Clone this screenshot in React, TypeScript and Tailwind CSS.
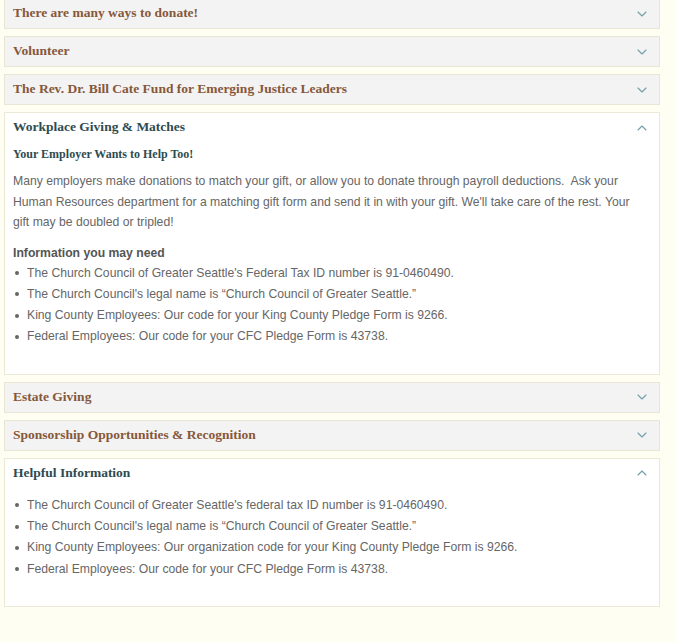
import { ChevronDown, ChevronUp } from "lucide-react"

const serif = { fontFamily: '"Liberation Serif", "DejaVu Serif", serif' }

function Header({ title, open }: { title: string; open?: boolean }) {
    return (
        <div className="h-[29px] flex items-center justify-between pl-2 pr-[9px]">
            <span
                className={`text-[13.5px] font-bold ${open ? "text-[#2f4b50]" : "text-[#86583a]"}`}
                style={serif}
            >
                {title}
            </span>
            {open ? (
                <ChevronUp className="w-4 h-4 text-[#74a0aa]" strokeWidth={1.7} />
            ) : (
                <ChevronDown className="w-4 h-4 text-[#74a0aa]" strokeWidth={1.7} />
            )}
        </div>
    )
}

function Closed({ title }: { title: string }) {
    return (
        <div className="border border-[#e9e6d6] bg-[#f3f3f3]">
            <Header title={title} />
        </div>
    )
}

function Bullets({ items, lh }: { items: string[]; lh: string }) {
    return (
        <ul className={lh}>
            {items.map((t) => (
                <li key={t} className="flex items-center">
                    <span className="w-[4px] h-[4px] rounded-full bg-[#666] ml-[2px] mr-[8px]" />
                    <span>{t}</span>
                </li>
            ))}
        </ul>
    )
}

export default function App() {
    return (
        <div
            className="min-h-[642px] w-[676px] bg-[#fffef3] overflow-hidden"
            style={{ fontFamily: '"Liberation Sans", Arial, sans-serif' }}
        >
            <div className="ml-[4px] w-[656px] -mt-[2px] flex flex-col gap-[7px]">
                <Closed title="There are many ways to donate!" />
                <Closed title="Volunteer" />
                <Closed title="The Rev. Dr. Bill Cate Fund for Emerging Justice Leaders" />

                {/* Workplace Giving */}
                <div className="border border-[#ece9d7] bg-white">
                    <Header title="Workplace Giving & Matches" open />
                    <div className="px-2 pb-[26px] text-[12.2px] text-[#666]">
                        <h3
                            className="mt-[2px] leading-[20px] text-[12px] font-bold text-[#2f4b50]"
                            style={serif}
                        >
                            Your Employer Wants to Help Too!
                        </h3>
                        <p className="mt-[7px] pr-[10px] leading-[20.5px]">
                            Many employers make donations to match your gift, or allow you to donate through payroll deductions.&nbsp; Ask your Human Resources department for a matching gift form and send it in with your gift. We'll take care of the rest. Your gift may be doubled or tripled!
                        </p>
                        <p className="mt-[10px] leading-[20px] font-bold text-[#555]">Information you may need</p>
                        <Bullets
                            lh="leading-[21.3px]"
                            items={[
                                "The Church Council of Greater Seattle's Federal Tax ID number is 91-0460490.",
                                "The Church Council's legal name is \u201cChurch Council of Greater Seattle.\u201d",
                                "King County Employees: Our code for your King County Pledge Form is 9266.",
                                "Federal Employees: Our code for your CFC Pledge Form is 43738.",
                            ]}
                        />
                    </div>
                </div>

                <Closed title="Estate Giving" />
                <Closed title="Sponsorship Opportunities & Recognition" />

                {/* Helpful Information */}
                <div className="border border-[#ece9d7] bg-white">
                    <Header title="Helpful Information" open />
                    <div className="px-2 pt-[7px] pb-[26px] text-[12.2px] text-[#666]">
                        <Bullets
                            lh="leading-[21.3px]"
                            items={[
                                "The Church Council of Greater Seattle's federal tax ID number is 91-0460490.",
                                "The Church Council's legal name is \u201cChurch Council of Greater Seattle.\u201d",
                                "King County Employees: Our organization code for your King County Pledge Form is 9266.",
                                "Federal Employees: Our code for your CFC Pledge Form is 43738.",
                            ]}
                        />
                    </div>
                </div>
            </div>
        </div>
    )
}
